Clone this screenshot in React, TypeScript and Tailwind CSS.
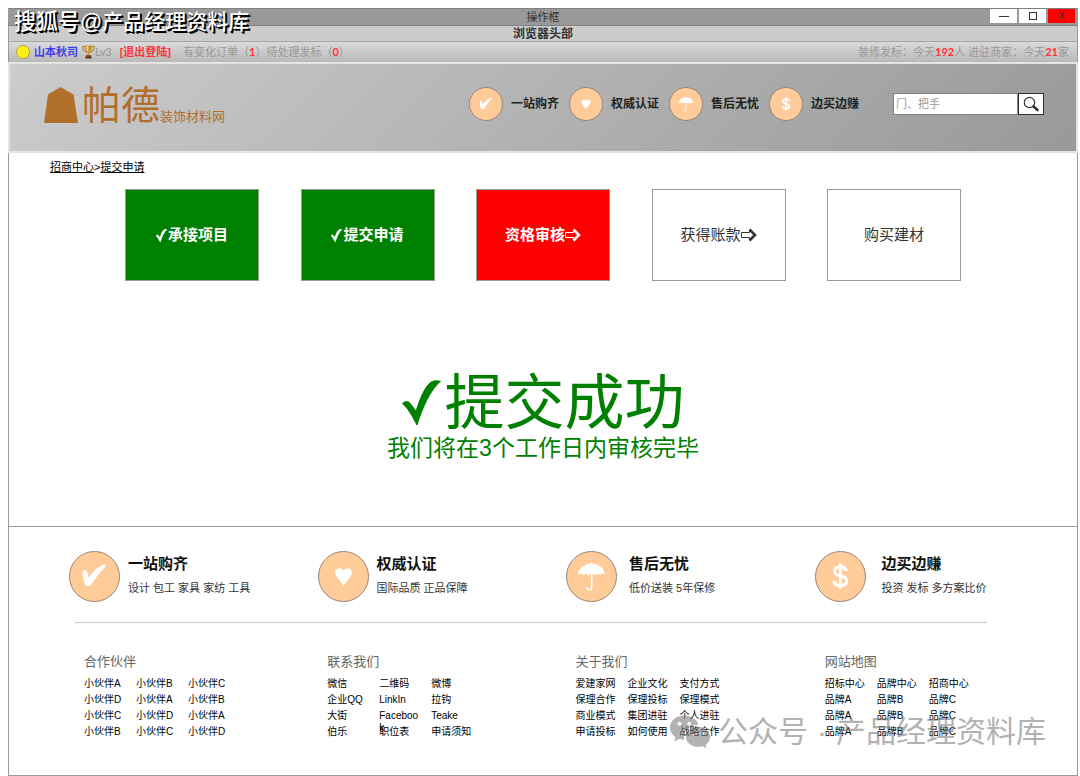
import type { ReactNode } from "react";
import { RiWechatFill } from "react-icons/ri";

const services = [
    { icon: "check", title: "一站购齐", text: "设计 包工 家具 家纺 工具", gap: "gap-2" },
    { icon: "heart", title: "权威认证", text: "国际品质 正品保障", gap: "gap-2" },
    { icon: "umbrella", title: "售后无忧", text: "低价送装 5年保修", gap: "gap-3" },
    { icon: "dollar", title: "边买边赚", text: "投资 发标 多方案比价", gap: "gap-4" },
];

const steps = [
    { label: "承接项目", state: "done" },
    { label: "提交申请", state: "done" },
    { label: "资格审核", state: "current", arrow: true },
    { label: "获得账款", state: "todo", arrow: true },
    { label: "购买建材", state: "todo" },
];

const stepStyles: Record<string, string> = {
    done: "bg-[#008000] text-white font-bold",
    current: "bg-[#ff0000] text-white font-bold",
    todo: "bg-white text-[#333333]",
};

const linkGroups = [
    {
        title: "合作伙伴",
        links: ["小伙伴A", "小伙伴B", "小伙伴C", "小伙伴D", "小伙伴A", "小伙伴B", "小伙伴C", "小伙伴D", "小伙伴A", "小伙伴B", "小伙伴C", "小伙伴D"],
    },
    {
        title: "联系我们",
        links: ["微信", "二维码", "微博", "企业QQ", "LinkIn", "拉钩", "大街", "Facebook", "Teake", "伯乐", "职位表", "申请须知"],
    },
    {
        title: "关于我们",
        links: ["爱建家网", "企业文化", "支付方式", "保理合作", "保理投标", "保理模式", "商业模式", "集团进驻", "个人进驻", "申请投标", "如何使用", "战略合作"],
    },
    {
        title: "网站地图",
        links: ["招标中心", "品牌中心", "招商中心", "品牌A", "品牌B", "品牌C", "品牌A", "品牌B", "品牌C", "品牌A", "品牌B", "品牌C"],
    },
];

// All service icons share a 50x50 box, the size of the big circle
const iconShapes: Record<string, ReactNode> = {
    check: (
        <path
            d="M13 19.5c1.800-1.400 4-.8 4.600.8l1.600 5.700C23 20.500 28.500 15 34.500 12.800c1.500-.3 2.300 1 1.500 2.200C31 19.800 26 27 21.500 33.500c-1.600 2-4.800 2-6 0C13.500 29.500 12.300 24 13 19.500z"
            fill="white"
        />
    ),
    heart: (
        <path
            d="M25 35c-1.400-4.800-8.500-8.800-8.500-14 0-5.200 6.800-6 8.500-1.500 1.700-4.500 8.500-3.700 8.500 1.500 0 5.200-7.100 9.200-8.500 14z"
            fill="white"
        />
    ),
    umbrella: (
        <>
            <path
                d="M24.200 10.500h1.600V12c7 .3 12.600 4.800 13.200 11.500-1.300-1.700-3.800-1.700-5.200.3-1.400-1.800-4-2-5.700 0-.9-1.200-2-1.500-3.100-1.500s-2.200.3-3.100 1.500c-1.700-2-4.300-1.800-5.700 0-1.400-2-3.900-2-5.200-.3.600-6.700 6.200-11.200 13.200-11.500z"
                fill="white"
            />
            <path d="M25.200 20v16c0 3.300-4.700 3.300-4.700.3" fill="none" stroke="white" strokeWidth="1.600" strokeLinecap="round" />
        </>
    ),
    dollar: (
        <path
            d="M31 19.500c-.6-3-3-4.300-6-4.300-3.300 0-6 1.500-6 4.600 0 6.200 12.500 3 12.500 9.600 0 3.300-3 4.900-6.500 4.900-3.600 0-6.300-1.600-6.700-5M25 11.500v26"
            fill="none"
            stroke="white"
            strokeWidth="3.200"
        />
    ),
};

function Circle({ icon, className }: { icon: string; className: string }) {
    return (
        <span className={`${className} shrink-0 rounded-full border border-[#998675] bg-[#ffcc99]`}>
            <svg viewBox="0 0 50 50" className="size-full" aria-hidden="true">
                {iconShapes[icon]}
            </svg>
        </span>
    );
}

function Tick({ className }: { className: string }) {
    return (
        <svg viewBox="0 0 39 46" className={className} fill="currentColor" stroke="currentColor" aria-hidden="true">
            <path d="M.5 23.500c2.500-2.500 5.500-2.800 7.500-.3 2.500 3.300 4.500 5.500 6 8.300C18 18 23 7 28.500 2.500 31 .6 35 .5 38.500 1.300 29 9 20.500 27 15 45 11.500 38.500 7 29 .5 23.500z" />
        </svg>
    );
}

function ArrowMark() {
    return (
        <svg viewBox="0 0 16 14" className="h-3.5 w-4" fill="none" stroke="currentColor" aria-hidden="true">
            <path d="M8.500 4.500H.5v5h8" strokeWidth="1" />
            <path d="M8.500 4.500V2M8.500 9.500V12" strokeWidth="1" />
            <path d="M8.500 1.500L14 7l-5.500 5.500" strokeWidth="2.600" />
        </svg>
    );
}

function Trophy() {
    return (
        <svg viewBox="0 0 13 14" className="h-3.5 w-[13px]" aria-hidden="true">
            <path d="M3 1.500H.7C.7 5 2 6.500 4.500 7M10 1.500h2.300C12.300 5 11 6.500 8.500 7" fill="none" stroke="#a5741c" strokeWidth="1" />
            <path d="M2.800.5h7.400C10.200 5 9 7.800 7.300 8.500v2H5.700v-2C4 7.800 2.800 5 2.800.5z" fill="#c8962b" />
            <path d="M4.500 1.200h1.700v6C5 6 4.500 4 4.500 1.200z" fill="#f5dd87" />
            <path d="M4 10.300h5l.8 3.200H3.200z" fill="#6b3514" />
        </svg>
    );
}

export default function App() {
    return (
        <div className="relative bg-white pt-2 pr-0.5 pl-2 font-['Liberation_Sans','Noto_Sans_CJK_SC',sans-serif] text-black">
            <div className="border-x border-[#999999]">
                <div className="grid h-[18px] grid-cols-[1fr_auto_1fr] border-t border-b border-[#808080] bg-[#999999]">
                    <span />
                    <span className="text-[11px] leading-4 text-[#333333]">操作框</span>
                    <div className="flex h-3.5 justify-end gap-0.5 pr-0.5 text-[10px] leading-3.5 text-[#333333]">
                        <button aria-label="最小化" className="flex w-[27px] items-center justify-center bg-white">
                            <span className="h-px w-2.5 bg-[#333333]" />
                        </button>
                        <button aria-label="最大化" className="flex w-[27px] items-center justify-center bg-white">
                            <span className="size-2 border border-[#333333]" />
                        </button>
                        <button aria-label="关闭" className="w-[27px] bg-[#ff0000]">X</button>
                    </div>
                </div>
                <div className="h-4 border-b border-[#a6a6a6] bg-[#cccccc] text-center text-xs leading-4 font-bold text-[#333333]">
                    浏览器头部
                </div>

                <div className="flex h-5 items-center bg-linear-to-b from-[#dadada] to-[#b9b9b9] pr-2 pl-[7px] text-[11px] leading-5 text-[#999999]">
                    <span className="mr-1 size-3.5 rounded-full border border-[#b5a642] bg-[#ffef1a]" />
                    <a href="#" className="font-bold text-[#4040e8]">山本秋司</a>
                    <span className="ml-1">
                        <Trophy />
                    </span>
                    <span className="font-['Lato']">Lv3</span>
                    <a href="#" className="ml-2 font-bold text-[#ff3333]">[退出登陆]</a>
                    <p className="ml-3">
                        有变化订单（<b className="font-['Lato'] text-[#ff3333]">1</b>）待处理发标（<b className="font-['Lato'] text-[#ff3333]">0</b>）
                    </p>
                    <p className="ml-auto">
                        装修发标：今天<b className="font-['Lato'] text-[#ff3333]">192</b>人 进驻商家：今天<b className="font-['Lato'] text-[#ff3333]">21</b>家
                    </p>
                </div>
            </div>

            <header className="flex h-[91px] items-center border-2 border-[#e4e4e4] bg-linear-135 from-[#cccccc] to-[#999999] pr-8 pb-2 pl-[34px]">
                <div className="mt-1 flex items-end text-[#b06f2b]">
                    <svg viewBox="0 0 34 36" className="mb-1.5 h-9 w-[34px]" fill="currentColor" aria-hidden="true">
                        <path d="M16.500 0L29.500 7.500 34 36H0L4 7.500z" />
                    </svg>
                    <span className="ml-1 text-[39px] leading-[46px]">帕德</span>
                    <span className="text-[13px] leading-6">装饰材料网</span>
                </div>
                <nav className="ml-auto flex">
                    {services.map((item) => (
                        <a key={item.title} href="#" className="flex w-25 items-center gap-2 text-xs font-bold text-[#222222]">
                            <Circle icon={item.icon} className="size-[34px] p-[3px]" />
                            {item.title}
                        </a>
                    ))}
                </nav>
                <form className="ml-6 flex h-[22px]">
                    <input
                        aria-label="搜索"
                        placeholder="门、把手"
                        className="w-[125px] border border-[#808080] bg-white px-0.5 pt-0.5 text-[11px] placeholder:text-[#999999]"
                    />
                    <button type="button" aria-label="搜索" className="flex w-[26px] items-center justify-center border border-[#333333] bg-white">
                        <svg viewBox="0 0 16 16" className="size-4" fill="none" stroke="#333333" aria-hidden="true">
                            <circle cx="6.500" cy="6.500" r="5.200" strokeWidth="1.200" />
                            <path d="M10.500 10.500l4 3.500" strokeWidth="2.600" strokeLinecap="round" />
                        </svg>
                    </button>
                </form>
            </header>

            <div className="border-x border-b border-[#999999]">
                <main className="h-[374px] border-b border-[#999999] pt-1.5">
                    <p className="pl-[41px] text-[11px] leading-4">
                        <a href="#" className="underline">招商中心</a>&gt;<a href="#" className="underline">提交申请</a>
                    </p>

                    <ol className="mt-3.5 flex justify-between pr-[116px] pl-[116px]">
                        {steps.map((step) => (
                            <li
                                key={step.label}
                                className={`flex h-[92px] w-[134px] items-center justify-center border border-[#999999] text-[15px] ${stepStyles[step.state]}`}
                            >
                                {step.state === "done" && <Tick className="mr-px h-[13px] w-[11px] stroke-3" />}
                                {step.label}
                                {step.arrow && <ArrowMark />}
                            </li>
                        ))}
                    </ol>

                    <div className="mt-[91px] text-center text-[#008000]">
                        <h1 className="flex items-end justify-center text-[60px] leading-16">
                            <Tick className="mr-1 mb-2.5 h-[46px] w-[39px]" />
                            提交成功
                        </h1>
                        <p className="text-[23px] leading-6">我们将在3个工作日内审核完毕</p>
                    </div>
                </main>

                <footer className="h-[248px] pt-6">
                    <div className="grid grid-cols-4 pr-3.5 pl-15">
                        {services.map((item) => (
                            <div key={item.title} className={`flex ${item.gap}`}>
                                <Circle icon={item.icon} className="size-[51px]" />
                                <div>
                                    <h2 className="text-[15px] leading-[26px] font-bold text-[#111111]">{item.title}</h2>
                                    <p className="text-[11px] leading-[22px] text-[#333333]">{item.text}</p>
                                </div>
                            </div>
                        ))}
                    </div>

                    <hr className="mt-5 mr-[90px] ml-[66px] border-[#cccccc]" />

                    <div className="mt-[27px] grid grid-cols-[243fr_248fr_249fr_244fr] pr-2 pl-[75px]">
                        {linkGroups.map((group) => (
                            <section key={group.title}>
                                <h3 className="mb-0.5 text-[13px] leading-6 text-[#666666]">{group.title}</h3>
                                <ul className="grid w-39 grid-cols-3 text-[10px] leading-4">
                                    {group.links.map((link, i) => (
                                        <li key={i} className="h-4">
                                            <a href="#" className="block w-10 pt-0.5 leading-3 break-all">{link}</a>
                                        </li>
                                    ))}
                                </ul>
                            </section>
                        ))}
                    </div>
                </footer>
            </div>

            {/* Channel marks laid over the page */}
            <div className="absolute top-2 left-3.5 text-[21px] leading-7 font-medium text-white [text-shadow:1px_1px_0_#000,2px_2px_0_#000]">
                <span className="text-[22px]">搜狐号@</span>产品经理资料库
            </div>
            <div className="pointer-events-none absolute right-[34px] bottom-[22px] flex items-center text-[30px] leading-10 text-[#808080] opacity-60">
                <RiWechatFill className="mr-1.5 size-11" />
                <span>公众号</span>
                <span className="w-7 text-center">·</span>
                <span>产品经理资料库</span>
            </div>
        </div>
    );
}
